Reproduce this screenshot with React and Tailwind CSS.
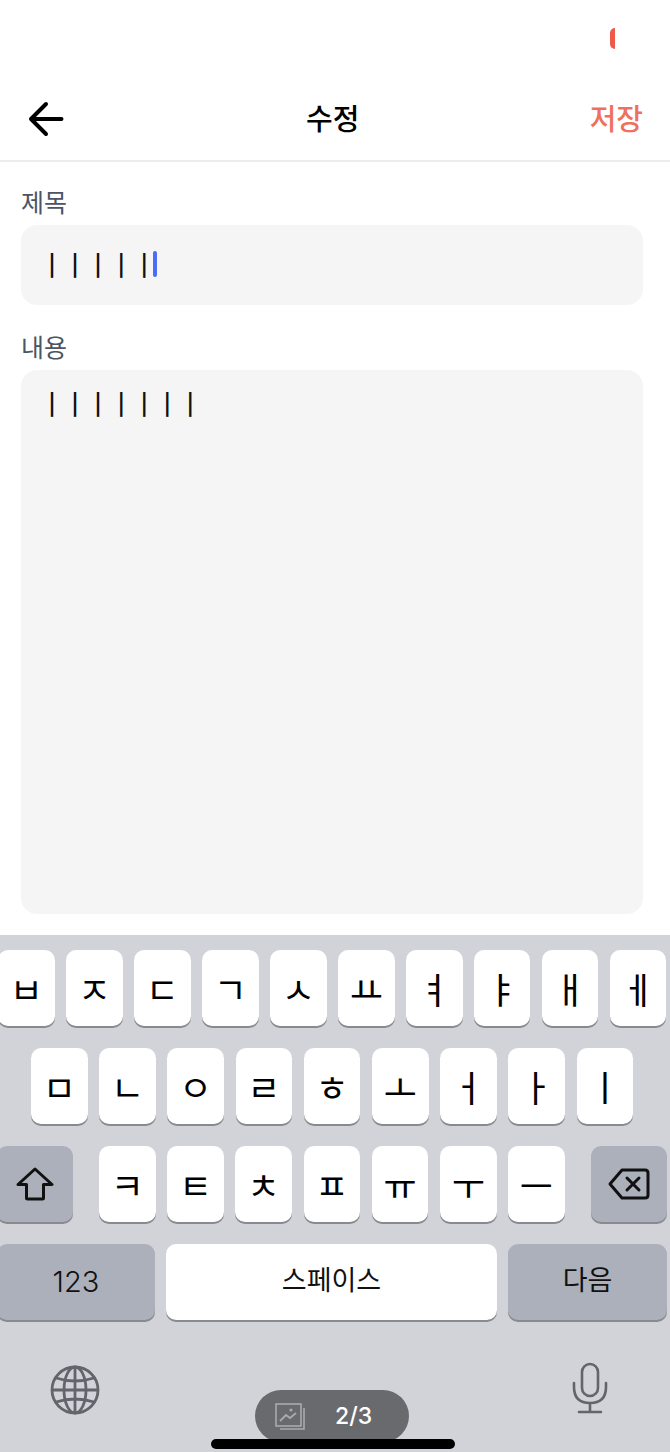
const KR = "font-['Noto_Sans_CJK_KR','Noto_Sans',sans-serif]";

function Key({ ch }) {
  return (
    <div className={`w-[56.6px] h-[76px] shrink-0 bg-white rounded-[10px] shadow-[0_2px_0_#898a8f] flex items-center justify-center text-[36px] leading-none text-black ${KR}`}>
      {ch}
    </div>
  );
}

function Shift() {
  return (
    <svg width="40" height="34" viewBox="0 0 40 34" fill="none" stroke="#111" strokeWidth="3" strokeLinejoin="round">
      <path d="M20 2 L37 17.5 H28.5 V31 Q28.5 32 27.5 32 H12.5 Q11.5 32 11.5 31 V17.5 H3 Z" />
    </svg>
  );
}

function Del() {
  return (
    <svg width="42" height="32" viewBox="0 0 42 32" fill="none" stroke="#111" strokeWidth="3" strokeLinejoin="round" strokeLinecap="round">
      <path d="M14 2 H37 Q40 2 40 5 V27 Q40 30 37 30 H14 L2 16 Z" />
      <path d="M19 10 L31 22 M31 10 L19 22" />
    </svg>
  );
}

function Globe() {
  return (
    <svg width="50" height="50" viewBox="0 0 50 50" fill="none" stroke="#62656b" strokeWidth="2.8">
      <circle cx="25" cy="25" r="23" />
      <ellipse cx="25" cy="25" rx="11" ry="23" />
      <path d="M25 2 V48 M2 25 H48 M6 13 Q25 19 44 13 M6 37 Q25 31 44 37" />
    </svg>
  );
}

function Mic() {
  return (
    <svg width="36" height="52" viewBox="0 0 36 52" fill="none" stroke="#62656b" strokeWidth="2.6" strokeLinecap="round">
      <rect x="10" y="2" width="16" height="32" rx="8" />
      <path d="M2 21 V25 Q2 41 18 41 Q34 41 34 25 V21 M18 41 V50 M7 50 H29" />
    </svg>
  );
}

function Gallery() {
  return (
    <svg width="30" height="27" viewBox="0 0 30 27" fill="none" stroke="#a9aaad" strokeWidth="1.6">
      <rect x="1" y="1" width="25" height="22" />
      <path d="M29 5 V26 H5" />
      <circle cx="16" cy="7" r="1.6" fill="#a9aaad" stroke="none" />
      <path d="M5 18 L11 12 L15 15 L21 10" strokeWidth="1.8" />
    </svg>
  );
}

export default function App() {
  return (
    <div className={`relative w-[670px] h-[1452px] overflow-hidden bg-white flex flex-col ${KR}`}>
      {/* status bar */}
      <div className="h-[80px] shrink-0 flex justify-end pt-[28px] pr-[55px]">
        <div className="w-[5px] h-[21px] bg-[#f0584a] rounded-l-full" />
      </div>

      {/* header */}
      <div className="h-[82px] shrink-0 border-b-2 border-[#ececec] flex items-center pl-[28px] pr-[27px]">
        <svg width="38" height="36" viewBox="0 0 38 36" fill="none" stroke="#000" strokeWidth="4" strokeLinecap="round" strokeLinejoin="round" className="-mt-[2px]">
          <path d="M18 3 L3 18 L18 33 M3 18 H33.5" />
        </svg>
        <div className="ml-[240px] -mt-[6px] text-[29px] leading-none font-medium text-black">수정</div>
        <div className="ml-auto -mt-[6px] text-[29px] leading-none font-medium text-[#f0705e]">저장</div>
      </div>

      {/* form */}
      <div className="h-[773px] shrink-0 px-[21px] pt-[23px] flex flex-col">
        <div className="text-[25px] leading-[32px] text-[#4b5563]">제목</div>
        <div className="mt-[8px] h-[80px] w-[622px] bg-[#f5f5f5] rounded-[16px] flex items-center pl-[18px] pb-[2px]">
          <span className="text-[28px] tracking-[-2.7px] leading-none text-[#111]">ㅣㅣㅣㅣㅣ</span>
          <span className="w-[4px] h-[26px] bg-[#4a6cf7] rounded-full -ml-[1px]" />
        </div>
        <div className="mt-[25px] text-[25px] leading-[32px] text-[#4b5563]">내용</div>
        <div className="mt-[8px] h-[544px] w-[622px] bg-[#f5f5f5] rounded-[16px] pl-[18px] pt-[19px]">
          <span className="text-[28px] tracking-[-2.7px] leading-none text-[#111]">ㅣㅣㅣㅣㅣㅣㅣ</span>
        </div>
      </div>

      {/* keyboard */}
      <div className="flex-1 bg-[#d1d3d9] pt-[15px] flex flex-col gap-[22px]">
        <div className="flex gap-[11.4px] -ml-[2px]">
          {["ㅂ","ㅈ","ㄷ","ㄱ","ㅅ","ㅛ","ㅕ","ㅑ","ㅐ","ㅔ"].map((c) => <Key key={c} ch={c} />)}
        </div>
        <div className="flex gap-[11.6px] pl-[31px]">
          {["ㅁ","ㄴ","ㅇ","ㄹ","ㅎ","ㅗ","ㅓ","ㅏ","ㅣ"].map((c) => <Key key={c} ch={c} />)}
        </div>
        <div className="flex -ml-[3px]">
          <div className="w-[76px] h-[76px] shrink-0 bg-[#abb0ba] rounded-[10px] shadow-[0_2px_0_#898a8f] flex items-center justify-center"><Shift /></div>
          <div className="flex gap-[11.6px] ml-[26px]">
            {["ㅋ","ㅌ","ㅊ","ㅍ","ㅠ","ㅜ","ㅡ"].map((c) => <Key key={c} ch={c} />)}
          </div>
          <div className="w-[76px] h-[76px] shrink-0 ml-[26px] bg-[#abb0ba] rounded-[10px] shadow-[0_2px_0_#898a8f] flex items-center justify-center"><Del /></div>
        </div>
        <div className="flex gap-[11px] -ml-[3px]">
          <div className="w-[158px] h-[76px] shrink-0 bg-[#abb0ba] rounded-[10px] shadow-[0_2px_0_#898a8f] flex items-center justify-center text-[29px] font-[350] text-[#111] font-['Inter',sans-serif]">123</div>
          <div className="w-[331px] h-[76px] shrink-0 bg-white rounded-[10px] shadow-[0_2px_0_#898a8f] flex items-center justify-center text-[27px] text-[#111] pb-[6px]">스페이스</div>
          <div className="w-[159px] h-[76px] shrink-0 bg-[#abb0ba] rounded-[10px] shadow-[0_2px_0_#898a8f] flex items-center justify-center text-[27px] text-[#111] pb-[6px]">다음</div>
        </div>
        <div className="flex justify-between pl-[50px] pr-[62px] pt-[23px]">
          <Globe />
          <div className="-mt-[3px]"><Mic /></div>
        </div>
      </div>

      {/* page indicator */}
      <div className="absolute left-[255px] top-[1390px] w-[154px] h-[52px] rounded-[26px] bg-[#696a6e] flex items-center pl-[20px] gap-[30px]">
        <Gallery />
        <span className="text-[23px] leading-none font-medium text-white font-['Inter',sans-serif]">2/3</span>
      </div>
      {/* home bar */}
      <div className="absolute left-[211px] top-[1439px] w-[244px] h-[10px] rounded-full bg-black" />
    </div>
  );
}
